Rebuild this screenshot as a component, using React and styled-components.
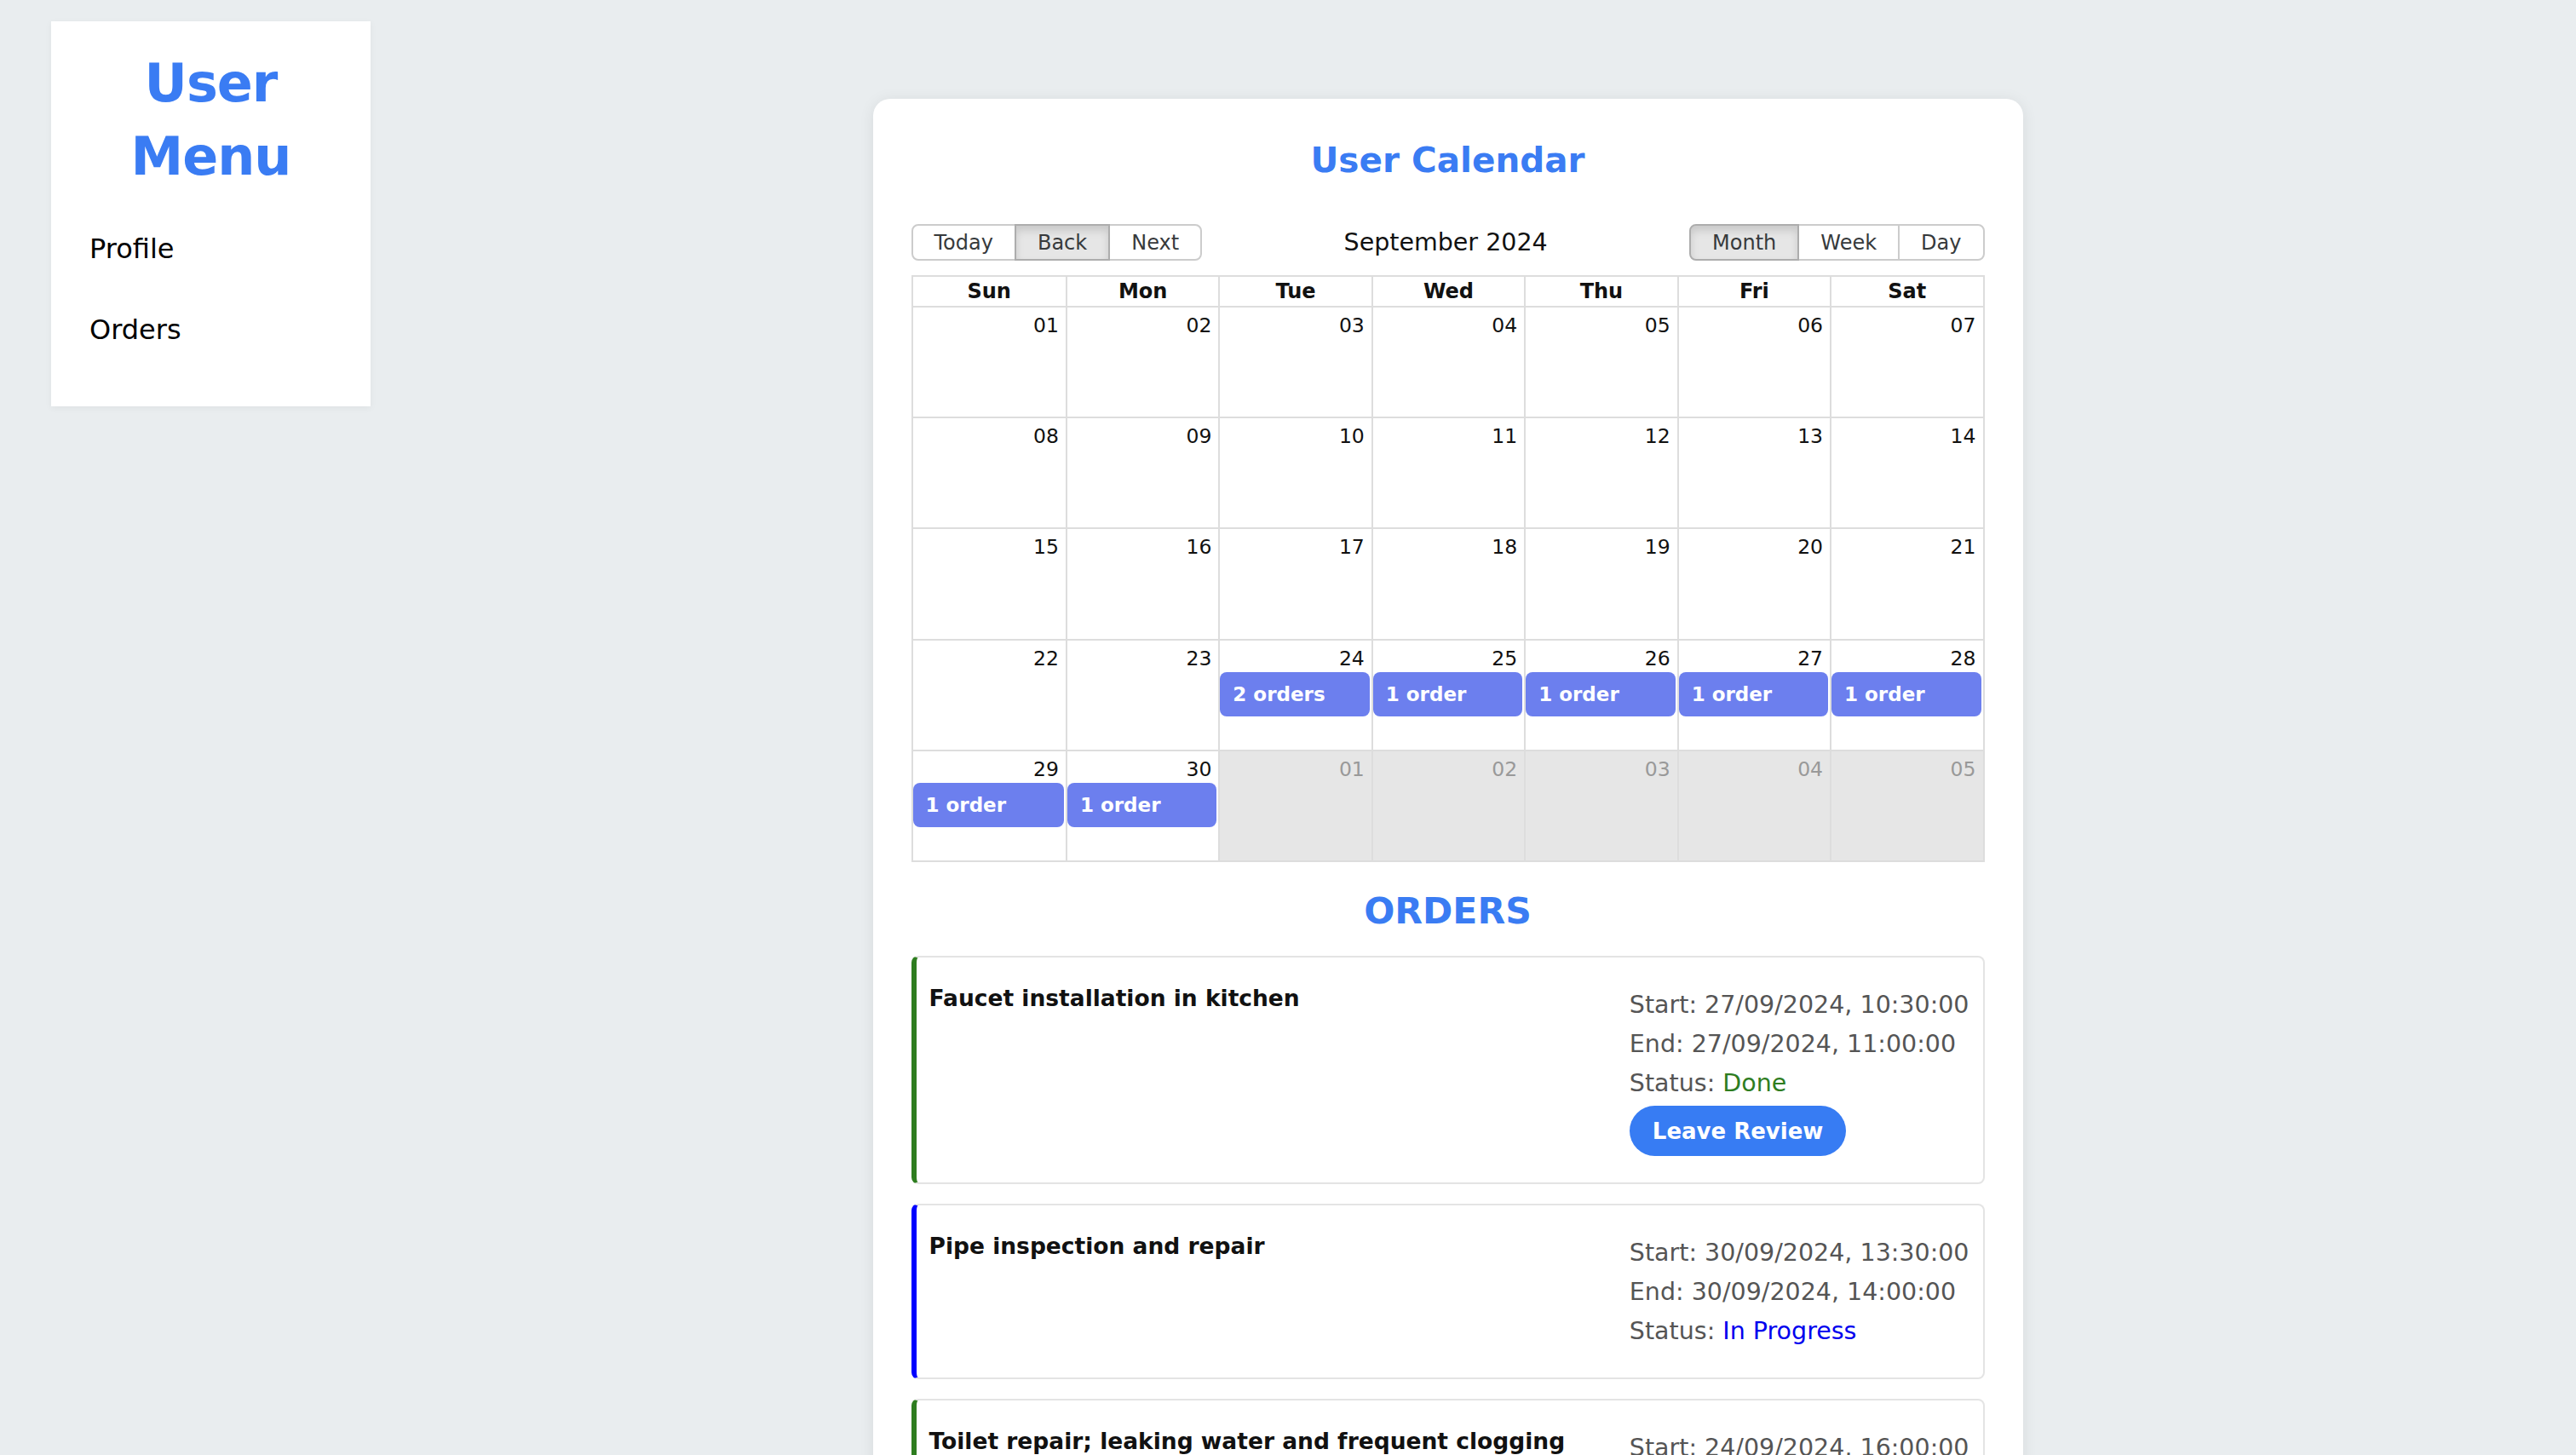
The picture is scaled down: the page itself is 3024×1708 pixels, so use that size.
import React from "react";
import styled, { createGlobalStyle } from "styled-components";

const GlobalStyle = createGlobalStyle`
  body {
    margin: 0;
    background: #e9edef;
    font-family: "DejaVu Sans", "Liberation Sans", sans-serif;
  }
  * { box-sizing: border-box; }
`;

const BLUE = "#3a7cf3";

const Page = styled.div`
  display: flex;
  align-items: flex-start;
  min-height: 100vh;
`;

const Sidebar = styled.aside`
  width: 375px;
  margin: 25px 0 0 60px;
  padding: 30px 0 70px;
  background: #fff;
  box-shadow: 0 2px 8px rgba(0, 0, 0, 0.05);
`;

const MenuTitle = styled.h1`
  margin: 0 0 45px;
  padding: 0 40px;
  text-align: center;
  color: ${BLUE};
  font-size: 62px;
  line-height: 86px;
  font-weight: 700;
  letter-spacing: -1px;
`;

const NavList = styled.nav`
  display: flex;
  flex-direction: column;
  gap: 55px;
  padding-left: 45px;
`;

const NavItem = styled.a`
  color: #000;
  font-size: 32px;
  line-height: 40px;
  text-decoration: none;
`;

const Main = styled.main`
  flex: 1;
  padding: 116px 60px 40px 0;
`;

const Card = styled.section`
  width: 1350px;
  margin: 0 auto;
  padding: 48px 45px 40px;
  background: #fff;
  border-radius: 20px;
  box-shadow: 0 2px 18px rgba(0, 0, 0, 0.08);
`;

const Title = styled.h2`
  margin: 0 0 51px;
  text-align: center;
  color: ${BLUE};
  font-size: 40.5px;
  line-height: 48px;
  font-weight: 700;
`;

const Toolbar = styled.div`
  display: flex;
  align-items: center;
  height: 43px;
  margin-bottom: 17px;
`;

const ButtonGroup = styled.div`
  display: inline-flex;
`;

const ToolButton = styled.button`
  height: 43px;
  padding: 0 25px;
  margin-left: -2px;
  font-family: inherit;
  font-size: 24px;
  color: #373a3c;
  background: ${(p) => (p.$active ? "#e6e6e6" : "transparent")};
  border: 2px solid ${(p) => (p.$active ? "#adadad" : "#ccc")};
  box-shadow: ${(p) => (p.$active ? "inset 0 6px 10px rgba(0,0,0,0.125)" : "none")};
  border-radius: 0;
  position: relative;
  z-index: ${(p) => (p.$active ? 1 : 0)};

  &:first-child {
    margin-left: 0;
    border-radius: 8px 0 0 8px;
  }
  &:last-child {
    border-radius: 0 8px 8px 0;
  }
`;

const MonthLabel = styled.span`
  flex: 1;
  text-align: center;
  font-size: 28.5px;
  color: #111;
`;

const MonthGrid = styled.div`
  display: flex;
  flex-direction: column;
  height: 689px;
  border: 2px solid #ddd;
`;

const HeaderRow = styled.div`
  display: grid;
  grid-template-columns: repeat(7, 1fr);
  border-bottom: 2px solid #ddd;
`;

const HeaderCell = styled.div`
  text-align: center;
  font-size: 24px;
  line-height: 34px;
  font-weight: 700;
  color: #111;
  & + & { border-left: 2px solid #ddd; }
`;

const WeekRow = styled.div`
  flex: 1;
  display: grid;
  grid-template-columns: repeat(7, 1fr);
  & + & { border-top: 2px solid #ddd; }
`;

const DayCell = styled.div`
  min-width: 0;
  background: ${(p) => (p.$off ? "#e6e6e6" : "#fff")};
  & + & { border-left: 2px solid #ddd; }
`;

const DateNum = styled.div`
  padding: 7px 8px 0 0;
  text-align: right;
  font-size: 23.5px;
  line-height: 28px;
  color: ${(p) => (p.$off ? "#999" : "#111")};
`;

const EventChip = styled.div`
  margin: 2px 2px 0 0;
  padding: 10px 15px;
  background: #6c7fee;
  color: #fff;
  border-radius: 8px;
  font-size: 23px;
  line-height: 32px;
  font-weight: 700;
  white-space: nowrap;
  overflow: hidden;
`;

const OrdersHeading = styled.h2`
  margin: 34px 0 28px;
  text-align: center;
  color: ${BLUE};
  font-size: 42.5px;
  line-height: 48px;
  font-weight: 700;
`;

const OrderCard = styled.article`
  display: flex;
  justify-content: space-between;
  align-items: flex-start;
  gap: 24px;
  margin-bottom: 23px;
  padding: 16px 16px 16px 15px;
  border: 2px solid #e4e4e4;
  border-left: 6px solid ${(p) => p.$accent};
  border-radius: 8px;
  background: #fff;
`;

const OrderTitle = styled.h3`
  flex: 1;
  margin: 16px 0 0;
  font-size: 26.5px;
  line-height: 31px;
  font-weight: 700;
  color: #111;
`;

const OrderInfo = styled.div`
  margin-top: 17px;
  padding-bottom: 15px;
  font-size: 28.5px;
  line-height: 46px;
  color: #555;
`;

const InfoLine = styled.div`
  white-space: nowrap;
`;

const StatusText = styled.span`
  color: ${(p) => p.$color};
`;

const ReviewButton = styled.button`
  display: block;
  height: 59px;
  margin-top: 3px;
  padding: 0 27px;
  border: none;
  border-radius: 30px;
  background: #377cf3;
  color: #fff;
  font-family: inherit;
  font-size: 26px;
  font-weight: 700;
`;

const DAYS = ["Sun", "Mon", "Tue", "Wed", "Thu", "Fri", "Sat"];

const EVENTS = {
  24: "2 orders",
  25: "1 order",
  26: "1 order",
  27: "1 order",
  28: "1 order",
  29: "1 order",
  30: "1 order",
};

const weeks = [];
for (let w = 0; w < 5; w++) {
  const row = [];
  for (let d = 0; d < 7; d++) {
    const n = w * 7 + d + 1;
    if (n <= 30) row.push({ day: n, off: false });
    else row.push({ day: n - 30, off: true });
  }
  weeks.push(row);
}

const pad = (n) => String(n).padStart(2, "0");

const ORDERS = [
  {
    title: "Faucet installation in kitchen",
    start: "27/09/2024, 10:30:00",
    end: "27/09/2024, 11:00:00",
    status: "Done",
  },
  {
    title: "Pipe inspection and repair",
    start: "30/09/2024, 13:30:00",
    end: "30/09/2024, 14:00:00",
    status: "In Progress",
  },
  {
    title: "Toilet repair; leaking water and frequent clogging",
    start: "24/09/2024, 16:00:00",
    end: "24/09/2024, 17:00:00",
    status: "Done",
  },
];

const STATUS_COLOR = {
  Done: "#2e7d1f",
  "In Progress": "#0000ee",
};

const ACCENT = {
  Done: "#2e7d1f",
  "In Progress": "#0000ff",
};

function Calendar() {
  return (
    <>
      <Toolbar>
        <ButtonGroup>
          <ToolButton>Today</ToolButton>
          <ToolButton $active>Back</ToolButton>
          <ToolButton>Next</ToolButton>
        </ButtonGroup>
        <MonthLabel>September 2024</MonthLabel>
        <ButtonGroup>
          <ToolButton $active>Month</ToolButton>
          <ToolButton>Week</ToolButton>
          <ToolButton>Day</ToolButton>
        </ButtonGroup>
      </Toolbar>
      <MonthGrid>
        <HeaderRow>
          {DAYS.map((d) => (
            <HeaderCell key={d}>{d}</HeaderCell>
          ))}
        </HeaderRow>
        {weeks.map((row, i) => (
          <WeekRow key={i}>
            {row.map((c) => (
              <DayCell key={`${i}-${c.day}`} $off={c.off}>
                <DateNum $off={c.off}>{pad(c.day)}</DateNum>
                {!c.off && EVENTS[c.day] && <EventChip>{EVENTS[c.day]}</EventChip>}
              </DayCell>
            ))}
          </WeekRow>
        ))}
      </MonthGrid>
    </>
  );
}

function Order({ order }) {
  return (
    <OrderCard $accent={ACCENT[order.status]}>
      <OrderTitle>{order.title}</OrderTitle>
      <OrderInfo>
        <InfoLine>Start: {order.start}</InfoLine>
        <InfoLine>End: {order.end}</InfoLine>
        <InfoLine>
          Status: <StatusText $color={STATUS_COLOR[order.status]}>{order.status}</StatusText>
        </InfoLine>
        {order.status === "Done" && <ReviewButton>Leave Review</ReviewButton>}
      </OrderInfo>
    </OrderCard>
  );
}

export default function App() {
  return (
    <>
      <GlobalStyle />
      <Page>
        <Sidebar>
          <MenuTitle>User Menu</MenuTitle>
          <NavList>
            <NavItem href="#">Profile</NavItem>
            <NavItem href="#">Orders</NavItem>
          </NavList>
        </Sidebar>
        <Main>
          <Card>
            <Title>User Calendar</Title>
            <Calendar />
            <OrdersHeading>ORDERS</OrdersHeading>
            {ORDERS.map((o) => (
              <Order key={o.title} order={o} />
            ))}
          </Card>
        </Main>
      </Page>
    </>
  );
}
